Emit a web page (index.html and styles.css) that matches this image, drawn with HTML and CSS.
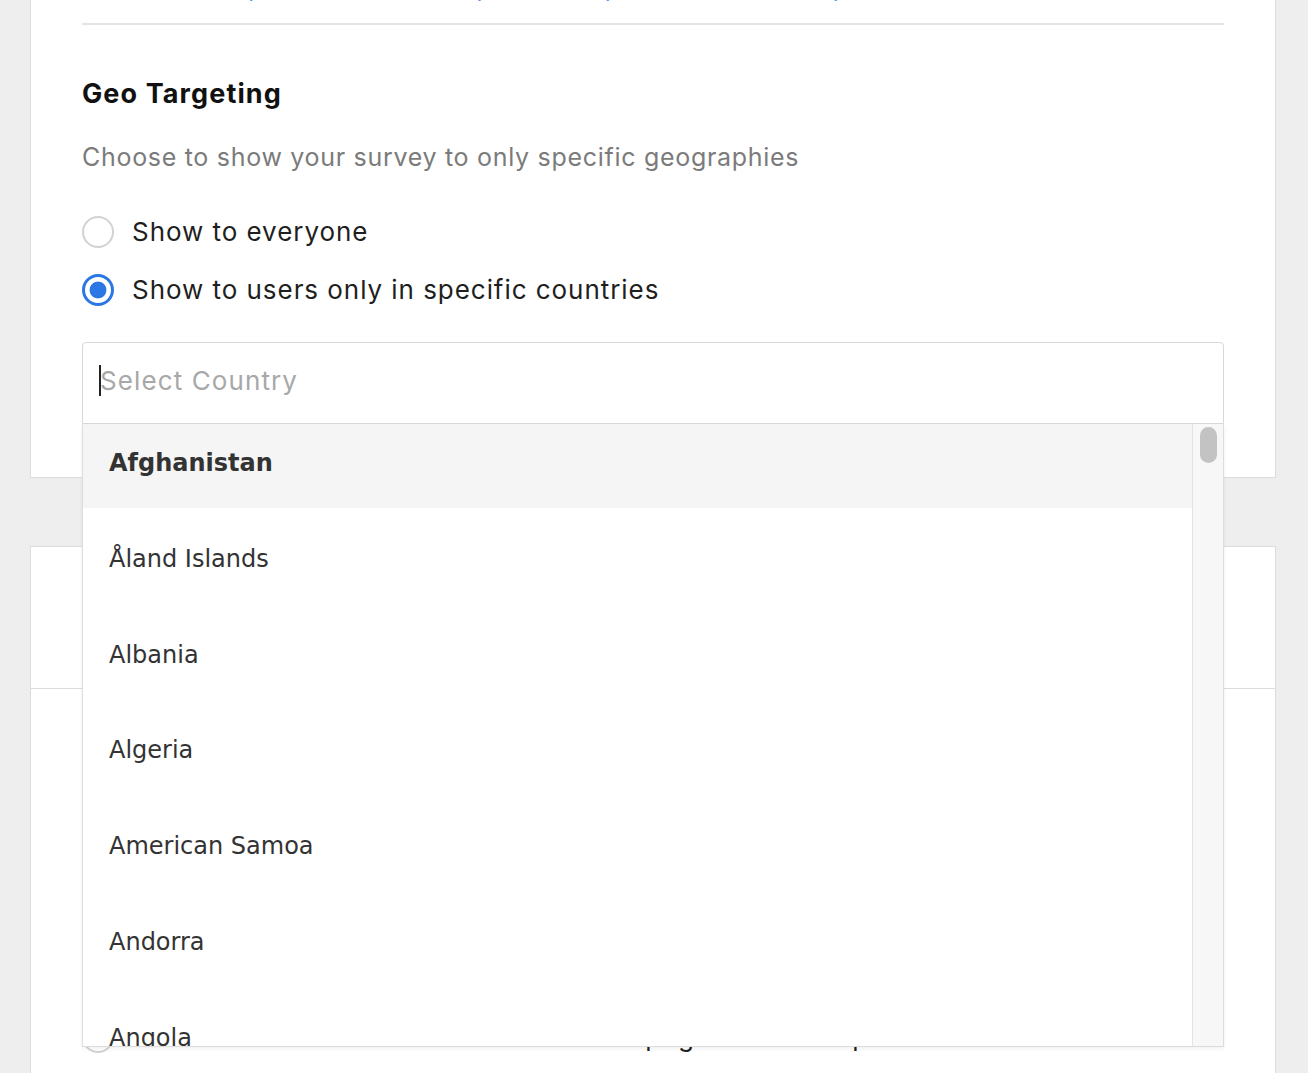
FILE: index.html
```html
<!DOCTYPE html>
<html lang="en">
<head>
<meta charset="utf-8">
<title>Geo Targeting</title>
<link rel="stylesheet" href="styles.css">
</head>
<body>
<div class="page">
  <section class="card card-geo">
    <div class="links">Include URLs <span class="link">(these home links)</span> and also <span class="link">(these home links)</span></div>
    <div class="rule"></div>
    <h2 class="title">Geo Targeting</h2>
    <p class="desc">Choose to show your survey to only specific geographies</p>
    <div class="options">
      <label class="option"><span class="radio"></span><span class="label">Show to everyone</span></label>
      <label class="option"><span class="radio checked"></span><span class="label">Show to users only in specific countries</span></label>
    </div>
    <div class="select">
      <div class="select-input"><span class="caret"></span><span class="placeholder">Select Country</span></div>
      <div class="menu">
        <ul class="menu-list">
          <li class="menu-item active">Afghanistan</li>
          <li class="menu-item">Åland Islands</li>
          <li class="menu-item">Albania</li>
          <li class="menu-item">Algeria</li>
          <li class="menu-item">American Samoa</li>
          <li class="menu-item">Andorra</li>
          <li class="menu-item">Angola</li>
        </ul>
        <div class="scrollbar"><div class="thumb"></div></div>
      </div>
    </div>
  </section>

  <section class="card card-two">
    <h2 class="title">Display Frequency</h2>
  </section>

  <section class="card card-three">
    <h2 class="title">Page Targeting</h2>
    <p class="desc">Choose the pages of your website where the survey appears</p>
    <div class="options">
      <label class="option"><span class="radio checked"></span><span class="label">Show on all pages</span></label>
      <label class="option"><span class="radio"></span><span class="label">Show only on specific pages</span></label>
      <label class="option"><span class="radio"></span><span class="label">Show once the user has read the main page of the shop</span></label>
    </div>
  </section>
</div>
</body>
</html>
```

FILE: styles.css
```css
* { box-sizing: border-box; }

html, body {
  margin: 0;
  padding: 0;
  background: #eeeeee;
  overflow: hidden;
}

body {
  font-family: Inter, "Liberation Sans", Arial, sans-serif;
  color: #1d1d1f;
}

.page {
  margin: 0 32px 0 30px;
}

.card {
  background: #ffffff;
  border: 1px solid #dcdcdc;
  padding: 0 51px;
}

.card-geo {
  margin-top: -29px;
  border-top: none;
  padding-bottom: 53px;
  position: relative;
}

.links {
  height: 34px;
  font-size: 25px;
  line-height: 34px;
  color: #ffffff;
  white-space: nowrap;
}

.link {
  color: #2b78e4;
  letter-spacing: 1.4px;
}

.rule {
  margin-top: 18px;
  height: 2px;
  background: #e4e4e4;
}

.title {
  margin: 52px 0 0;
  font-size: 27px;
  line-height: 34px;
  font-weight: 700;
  letter-spacing: 1.1px;
  color: #111111;
}

.desc {
  margin: 29px 0 0;
  font-size: 25px;
  line-height: 34px;
  letter-spacing: 0.7px;
  color: #7b7b7b;
}

.options {
  margin-top: 41px;
  display: flex;
  flex-direction: column;
  gap: 24px;
}

.option {
  display: flex;
  align-items: center;
  gap: 18px;
  height: 34px;
  font-size: 26px;
  line-height: 34px;
  letter-spacing: 0.95px;
  color: #1f1f1f;
}

.radio {
  flex: none;
  width: 32px;
  height: 32px;
  border-radius: 50%;
  border: 2px solid #d2d2d2;
  background: #ffffff;
}

.radio.checked {
  border: 3px solid #2b78e4;
  background: radial-gradient(circle, #2b78e4 0 8px, #ffffff 8.8px);
}

.select {
  position: relative;
  margin-top: 35px;
}

.select-input {
  height: 82px;
  border: 1px solid #d8d8d8;
  border-radius: 4px 4px 0 0;
  display: flex;
  align-items: center;
  padding: 0 0 6px 16px;
  font-size: 26px;
  letter-spacing: 1.1px;
}

.caret {
  width: 2px;
  height: 31px;
  background: #222222;
}

.placeholder {
  color: #a8a8a8;
  margin-left: -1px;
}

.menu {
  position: absolute;
  z-index: 10;
  top: 100%;
  left: 0;
  right: 0;
  height: 623px;
  display: flex;
  background: #ffffff;
  border: 1px solid #dddddd;
  border-top: none;
  box-shadow: 0 2px 4px rgba(0, 0, 0, 0.06);
  overflow: hidden;
}

.menu-list {
  flex: 1;
  list-style: none;
  margin: 0;
  padding: 0;
  display: flex;
  flex-direction: column;
  gap: 11.8px;
}

.menu-item {
  flex: none;
  height: 84px;
  padding: 0 0 6px 26px;
  font-family: "DejaVu Sans", Verdana, sans-serif;
  font-size: 24px;
  line-height: 78px;
  color: #333333;
  white-space: nowrap;
}

.menu-item.active {
  background: #f5f5f5;
  font-weight: 700;
}

.scrollbar {
  flex: none;
  width: 31px;
  background: #f7f7f7;
  border-left: 1px solid #e3e3e3;
  padding-top: 3px;
}

.thumb {
  width: 17px;
  height: 36px;
  margin: 0 auto;
  border-radius: 9px;
  background: #c3c3c3;
}

.card-two {
  margin-top: 68px;
  padding-top: 53px;
  padding-bottom: 54px;
}

.card-two .title {
  margin: 0;
}

.card-three {
  border-top: none;
  padding-top: 77px;
  padding-bottom: 60px;
}

.card-three .title {
  margin: 0;
}
```
